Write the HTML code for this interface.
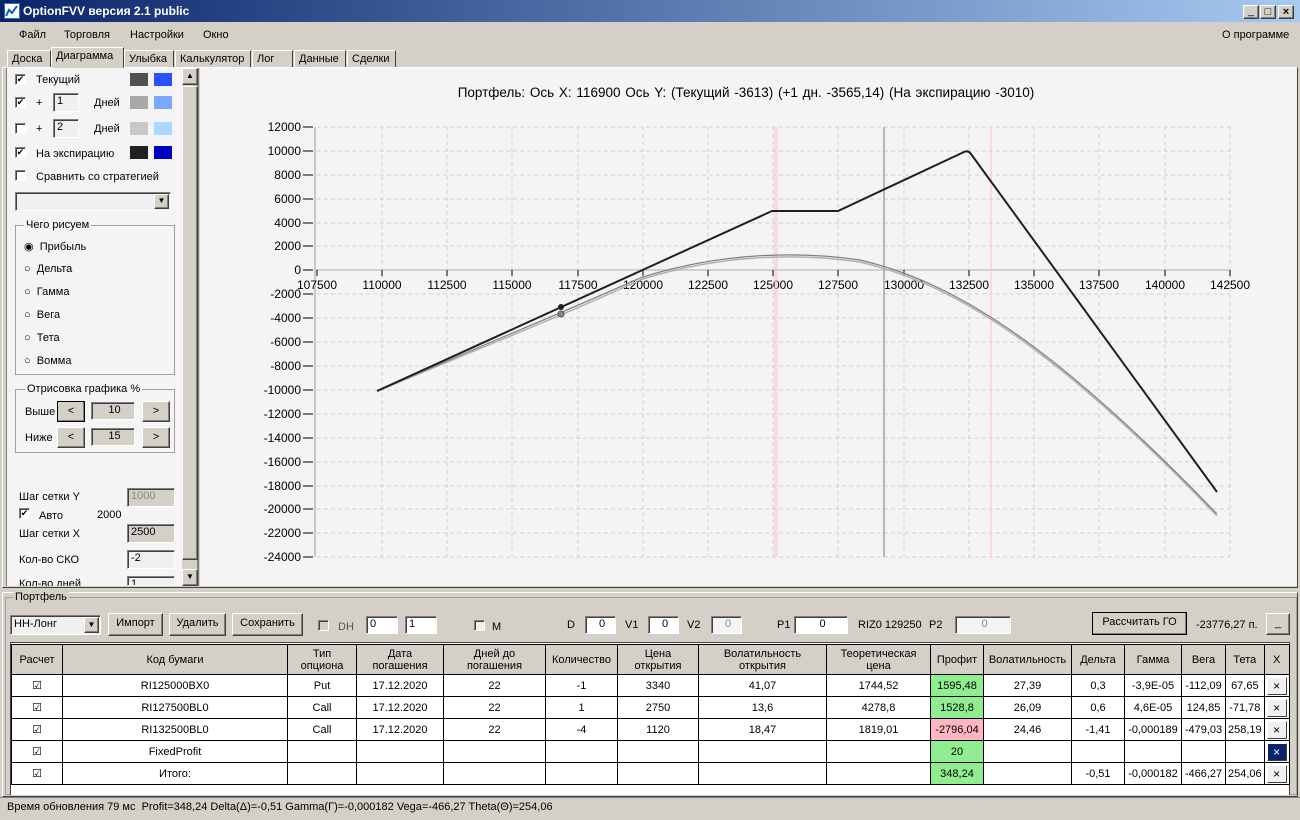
<!DOCTYPE html>
<html><head><meta charset="utf-8"><style>
*{box-sizing:border-box;margin:0;padding:0}
body{width:1300px;height:820px;overflow:hidden;background:#d4d0c8;font-family:"Liberation Sans",sans-serif;font-size:11px;color:#000;position:relative}
.a{position:absolute}
.btn{position:absolute;background:#d4d0c8;border:1px solid;border-color:#fff #404040 #404040 #fff;box-shadow:inset -1px -1px 0 #808080;text-align:center;line-height:19px}
.inp{position:absolute;background:#fff;border:1px solid;border-color:#808080 #fff #fff #808080;box-shadow:inset 1px 1px 0 #404040;padding-left:3px;line-height:15px}
.cb{position:absolute;width:11px;height:11px;background:#fff;border:1px solid;border-color:#808080 #fff #fff #808080;box-shadow:inset 1px 1px 0 #404040;font-size:9px;line-height:9px;text-align:center}
.tab{position:absolute;top:50px;height:18px;border:1px solid;border-color:#fff #404040 transparent #fff;line-height:16px;padding:0 4px;font-size:11px}
table{border-collapse:collapse;position:absolute;left:11px;top:644px;font-size:11px}
td{border:1px solid #000;text-align:center;height:22px;padding:0 2px;background:#fff}
tr.h td{background:#d4d0c8;height:30px;line-height:12px}
.g{background:#90ee90 !important}.r{background:#ffb6c1 !important}
.x{display:inline-block;width:20px;height:18px;border:1px solid;border-color:#fff #404040 #404040 #fff;background:#f0f0f0;line-height:16px;font-size:12px}
</style></head><body>
<div class="a" style="left:0;top:0;width:1300px;height:22px;background:linear-gradient(90deg,#0a246a,#a6caf0);"></div>
<div class="a" style="left:4px;top:3px;width:16px;height:16px;background:#fff;border:1px solid #3a6ea5"><svg width="14" height="14"><path d="M1 12 L4 6 L7 9 L12 2" stroke="#1060c0" stroke-width="2" fill="none"/></svg></div>
<div class="a" style="left:23px;top:4px;color:#fff;font-weight:bold;font-size:12px">OptionFVV версия 2.1 public</div>
<div class="btn" style="left:1243px;top:5px;width:16px;height:14px;line-height:10px">_</div>
<div class="btn" style="left:1260px;top:5px;width:16px;height:14px;line-height:12px">□</div>
<div class="btn" style="left:1278px;top:5px;width:16px;height:14px;line-height:12px;font-weight:bold">×</div>
<div class="a" style="left:19px;top:29px">Файл</div>
<div class="a" style="left:64px;top:29px">Торговля</div>
<div class="a" style="left:130px;top:29px">Настройки</div>
<div class="a" style="left:203px;top:29px">Окно</div>
<div class="a" style="left:1222px;top:29px">О программе</div>
<div class="tab" style="left:7px;width:44px">Доска</div>
<div class="tab" style="left:51px;top:47px;height:21px;width:73px;background:#d4d0c8;z-index:2">Диаграмма</div>
<div class="tab" style="left:124px;width:50px">Улыбка</div>
<div class="tab" style="left:175px;width:76px">Калькулятор</div>
<div class="tab" style="left:252px;width:41px">Лог</div>
<div class="tab" style="left:294px;width:52px">Данные</div>
<div class="tab" style="left:347px;width:49px">Сделки</div>
<div class="a" style="left:2px;top:67px;width:1296px;height:521px;border:1px solid;border-color:#fff #404040 #404040 #fff"></div>
<div class="a" style="left:6px;top:68px;width:176px;height:518px;background:#f4f4f4;border-left:1px solid #808080"></div>
<div class="a" style="left:182px;top:68px;width:17px;height:518px;background:#d4d0c8;border-right:2px solid #808080"></div>
<div class="btn" style="left:182px;top:68px;width:16px;height:17px;font-size:8px;line-height:14px">▲</div>
<div class="btn" style="left:182px;top:86px;width:16px;height:474px"></div>
<div class="btn" style="left:182px;top:569px;width:16px;height:17px;font-size:8px;line-height:14px">▼</div>
<div class="cb" style="left:15px;top:74px">✔</div><div class="a" style="left:36px;top:74px">Текущий</div>
<div class="a" style="left:130px;top:73px;width:18px;height:13px;background:#505050"></div><div class="a" style="left:154px;top:73px;width:18px;height:13px;background:#2a50ff"></div>
<div class="cb" style="left:15px;top:97px">✔</div><div class="a" style="left:36px;top:97px">+</div>
<div class="inp" style="left:53px;top:93px;width:26px;height:19px;background:#f0f0f0">1</div><div class="a" style="left:94px;top:97px">Дней</div>
<div class="a" style="left:130px;top:96px;width:18px;height:13px;background:#a8a8a8"></div><div class="a" style="left:154px;top:96px;width:18px;height:13px;background:#7aa8ff"></div>
<div class="cb" style="left:15px;top:123px"></div><div class="a" style="left:36px;top:123px">+</div>
<div class="inp" style="left:53px;top:119px;width:26px;height:19px;background:#f0f0f0">2</div><div class="a" style="left:94px;top:123px">Дней</div>
<div class="a" style="left:130px;top:122px;width:18px;height:13px;background:#c8c8c8"></div><div class="a" style="left:154px;top:122px;width:18px;height:13px;background:#aad8ff"></div>
<div class="cb" style="left:15px;top:147px">✔</div><div class="a" style="left:36px;top:148px">На экспирацию</div>
<div class="a" style="left:130px;top:146px;width:18px;height:13px;background:#202020"></div><div class="a" style="left:154px;top:146px;width:18px;height:13px;background:#0000c0"></div>
<div class="cb" style="left:15px;top:170px"></div><div class="a" style="left:36px;top:171px">Сравнить со стратегией</div>
<div class="inp" style="left:15px;top:192px;width:156px;height:19px;background:#f0f0f0"></div><div class="btn" style="left:154px;top:194px;width:15px;height:15px;font-size:8px;line-height:12px">▼</div>
<div class="a" style="left:15px;top:225px;width:160px;height:150px;border:1px solid #a0a0a0"></div>
<div class="a" style="left:24px;top:219px;background:#f4f4f4;padding:0 2px">Чего рисуем</div>
<div class="a" style="left:24px;top:240px">◉ &nbsp;Прибыль</div>
<div class="a" style="left:24px;top:263px">○ &nbsp;Дельта</div>
<div class="a" style="left:24px;top:286px">○ &nbsp;Гамма</div>
<div class="a" style="left:24px;top:309px">○ &nbsp;Вега</div>
<div class="a" style="left:24px;top:332px">○ &nbsp;Тета</div>
<div class="a" style="left:24px;top:355px">○ &nbsp;Вомма</div>
<div class="a" style="left:15px;top:389px;width:160px;height:64px;border:1px solid #a0a0a0"></div>
<div class="a" style="left:25px;top:383px;background:#f4f4f4;padding:0 2px">Отрисовка графика %</div>
<div class="a" style="left:25px;top:406px">Выше</div><div class="btn" style="left:57px;top:401px;width:28px;height:21px;border-color:#000">&lt;</div>
<div class="inp" style="left:91px;top:402px;width:44px;height:18px;background:#d4d0c8;text-align:center">10</div><div class="btn" style="left:142px;top:401px;width:28px;height:21px">&gt;</div>
<div class="a" style="left:25px;top:432px">Ниже</div><div class="btn" style="left:57px;top:427px;width:28px;height:21px">&lt;</div>
<div class="inp" style="left:91px;top:428px;width:44px;height:18px;background:#d4d0c8;text-align:center">15</div><div class="btn" style="left:142px;top:427px;width:28px;height:21px">&gt;</div>
<div class="a" style="left:19px;top:491px">Шаг сетки Y</div><div class="inp" style="left:127px;top:488px;width:48px;height:19px;background:#d4d0c8;color:#888">1000</div>
<div class="cb" style="left:19px;top:508px">✔</div><div class="a" style="left:39px;top:510px">Авто</div><div class="a" style="left:97px;top:509px">2000</div>
<div class="a" style="left:19px;top:528px">Шаг сетки X</div><div class="inp" style="left:127px;top:524px;width:48px;height:19px;background:#d4d0c8">2500</div>
<div class="a" style="left:19px;top:554px">Кол-во СКО</div><div class="inp" style="left:127px;top:550px;width:48px;height:19px;background:#f0f0f0">-2</div>
<div class="a" style="left:19px;top:578px;height:8px;overflow:hidden">Кол-во дней</div><div class="inp" style="left:127px;top:576px;width:48px;height:10px;background:#f0f0f0;overflow:hidden">1</div>
<svg class="a" style="left:200px;top:68px" width="1097" height="518" viewBox="200 68 1097 518">
<rect x="200" y="68" width="1097" height="518" fill="#f4f4f4"/>
<text x="746" y="97" font-size="13.5" text-anchor="middle" font-family="Liberation Sans" word-spacing="1">Портфель: Ось X: 116900 Ось Y: (Текущий -3613) (+1 дн. -3565,14) (На экспирацию -3010)</text>
<g stroke="#d0d0d0" stroke-dasharray="4,3" stroke-width="1">
<path d="M382 127V557M447 127V557M512 127V557M578 127V557M643 127V557M708 127V557M773 127V557M838 127V557M904 127V557M969 127V557M1034 127V557M1099 127V557M1165 127V557M1230 127V557"/>
<path d="M317 127H1230M317 151H1230M317 175H1230M317 199H1230M317 223H1230M317 246H1230M317 294H1230M317 318H1230M317 342H1230M317 366H1230M317 390H1230M317 414H1230M317 438H1230M317 462H1230M317 486H1230M317 509H1230M317 533H1230M317 557H1230"/>
</g>
<path d="M315 127V557" stroke="#c8c8c8" stroke-width="2"/>
<path d="M315 270H1230" stroke="#d0d0d0" stroke-width="2"/>
<g stroke="#000"><path d="M303 127H313M303 151H313M303 175H313M303 199H313M303 223H313M303 246H313M303 270H313M303 294H313M303 318H313M303 342H313M303 366H313M303 390H313M303 414H313M303 438H313M303 462H313M303 486H313M303 509H313M303 533H313M303 557H313"/>
<path d="M317 270V276M382 270V276M447 270V276M512 270V276M578 270V276M643 270V276M708 270V276M773 270V276M838 270V276M904 270V276M969 270V276M1034 270V276M1099 270V276M1165 270V276M1230 270V276"/></g>
<g font-size="12" font-family="Liberation Sans" text-anchor="end" fill="#000">
<text x="301" y="131">12000</text><text x="301" y="155">10000</text><text x="301" y="179">8000</text><text x="301" y="203">6000</text><text x="301" y="227">4000</text><text x="301" y="250">2000</text><text x="301" y="274">0</text><text x="301" y="298">-2000</text><text x="301" y="322">-4000</text><text x="301" y="346">-6000</text><text x="301" y="370">-8000</text><text x="301" y="394">-10000</text><text x="301" y="418">-12000</text><text x="301" y="442">-14000</text><text x="301" y="466">-16000</text><text x="301" y="490">-18000</text><text x="301" y="513">-20000</text><text x="301" y="537">-22000</text><text x="301" y="561">-24000</text></g>
<g font-size="12" font-family="Liberation Sans" text-anchor="middle">
<text x="317" y="289">107500</text><text x="382" y="289">110000</text><text x="447" y="289">112500</text><text x="512" y="289">115000</text><text x="578" y="289">117500</text><text x="643" y="289">120000</text><text x="708" y="289">122500</text><text x="773" y="289">125000</text><text x="838" y="289">127500</text><text x="904" y="289">130000</text><text x="969" y="289">132500</text><text x="1034" y="289">135000</text><text x="1099" y="289">137500</text><text x="1165" y="289">140000</text><text x="1230" y="289">142500</text></g>
<path d="M775 127V557M777 127V557M991 127V557" stroke="#ffc0c8" stroke-width="1"/>
<path d="M884 127V557" stroke="#a0a0a8" stroke-width="1.5"/>
<path d="M378 391 C470 352 560 317 640 280 C720 254 800 253 860 262 C950 283 1050 342 1217 516" stroke="#b0b0b0" stroke-width="1.5" fill="none"/>
<path d="M378 391 C470 350 560 314 640 278 C720 252 800 251 860 260 C950 281 1050 340 1217 514" stroke="#808080" stroke-width="1.2" fill="none"/>
<path d="M377 391 L772 211 L838 211 L964 152 Q968 150 971 154 L1217 492" stroke="#202020" stroke-width="2" fill="none"/>
<circle cx="561" cy="307" r="3" fill="#202020"/><circle cx="561" cy="314" r="3" fill="#888" stroke="#555"/>
</svg>
<div class="a" style="left:2px;top:592px;width:1296px;height:205px;border:1px solid;border-color:#fff #404040 #404040 #fff"></div>
<div class="a" style="left:5px;top:597px;width:1292px;height:198px;border:1px solid #a0a0a0"></div>
<div class="a" style="left:13px;top:591px;background:#d4d0c8;padding:0 2px">Портфель</div>
<div class="inp" style="left:10px;top:615px;width:91px;height:20px;background:#f0f0f0;line-height:17px">НН-Лонг</div><div class="btn" style="left:84px;top:617px;width:15px;height:16px;font-size:8px;line-height:13px">▼</div>
<div class="btn" style="left:108px;top:613px;width:55px;height:23px">Импорт</div>
<div class="btn" style="left:169px;top:613px;width:57px;height:23px">Удалить</div>
<div class="btn" style="left:232px;top:613px;width:71px;height:23px">Сохранить</div>
<div class="cb" style="left:318px;top:620px;background:#d4d0c8"></div><div class="a" style="left:338px;top:621px;color:#555">DH</div>
<div class="inp" style="left:366px;top:616px;width:32px;height:18px">0</div><div class="inp" style="left:405px;top:616px;width:32px;height:18px">1</div>
<div class="cb" style="left:474px;top:620px;background:#f0f0f0"></div><div class="a" style="left:492px;top:621px">M</div>
<div class="a" style="left:567px;top:619px">D</div><div class="inp" style="left:585px;top:616px;width:31px;height:18px;text-align:center">0</div>
<div class="a" style="left:625px;top:619px">V1</div><div class="inp" style="left:648px;top:616px;width:31px;height:18px;text-align:center">0</div>
<div class="a" style="left:687px;top:619px">V2</div><div class="inp" style="left:711px;top:616px;width:31px;height:18px;text-align:center;background:#f4f4f4;color:#888">0</div>
<div class="a" style="left:777px;top:619px">P1</div><div class="inp" style="left:794px;top:616px;width:54px;height:18px;text-align:center">0</div>
<div class="a" style="left:858px;top:619px">RIZ0 129250</div><div class="a" style="left:929px;top:619px">P2</div><div class="inp" style="left:955px;top:616px;width:56px;height:18px;text-align:center;background:#f4f4f4;color:#888">0</div>
<div class="btn" style="left:1092px;top:612px;width:95px;height:23px;border-color:#000">Рассчитать ГО</div>
<div class="a" style="left:1196px;top:619px">-23776,27 п.</div>
<div class="btn" style="left:1266px;top:613px;width:24px;height:22px">_</div>
<div class="a" style="left:10px;top:642px;width:1280px;height:153px;background:#fff;border:1px solid #404040;border-bottom:none"></div>
<table>
<tr class="h"><td style="width:51px">Расчет</td><td style="width:225px">Код бумаги</td><td style="width:69px">Тип<br>опциона</td><td style="width:87px">Дата<br>погашения</td><td style="width:102px">Дней до<br>погашения</td><td style="width:72px">Количество</td><td style="width:81px">Цена<br>открытия</td><td style="width:128px">Волатильность<br>открытия</td><td style="width:104px">Теоретическая<br>цена</td><td style="width:53px">Профит</td><td style="width:88px">Волатильность</td><td style="width:53px">Дельта</td><td style="width:57px">Гамма</td><td style="width:44px">Вега</td><td style="width:38px">Тета</td><td style="width:24px">X</td></tr>
<tr><td>☑</td><td>RI125000BX0</td><td>Put</td><td>17.12.2020</td><td>22</td><td>-1</td><td>3340</td><td>41,07</td><td>1744,52</td><td class="g">1595,48</td><td>27,39</td><td>0,3</td><td>-3,9E-05</td><td>-112,09</td><td>67,65</td><td><span class="x">×</span></td></tr>
<tr><td>☑</td><td>RI127500BL0</td><td>Call</td><td>17.12.2020</td><td>22</td><td>1</td><td>2750</td><td>13,6</td><td>4278,8</td><td class="g">1528,8</td><td>26,09</td><td>0,6</td><td>4,6E-05</td><td>124,85</td><td>-71,78</td><td><span class="x">×</span></td></tr>
<tr><td>☑</td><td>RI132500BL0</td><td>Call</td><td>17.12.2020</td><td>22</td><td>-4</td><td>1120</td><td>18,47</td><td>1819,01</td><td class="r">-2796,04</td><td>24,46</td><td>-1,41</td><td>-0,000189</td><td>-479,03</td><td>258,19</td><td><span class="x">×</span></td></tr>
<tr><td>☑</td><td>FixedProfit</td><td></td><td></td><td></td><td></td><td></td><td></td><td></td><td class="g">20</td><td></td><td></td><td></td><td></td><td></td><td><span class="x" style="background:#0a246a;color:#fff">×</span></td></tr>
<tr><td>☑</td><td>Итого:</td><td></td><td></td><td></td><td></td><td></td><td></td><td></td><td class="g">348,24</td><td></td><td>-0,51</td><td>-0,000182</td><td>-466,27</td><td>254,06</td><td><span class="x">×</span></td></tr>
</table>
<div class="a" style="left:0;top:797px;width:1300px;height:23px;border-top:1px solid #808080"></div>
<div class="a" style="left:7px;top:801px">Время обновления 79 мс &nbsp;Profit=348,24 Delta(Δ)=-0,51 Gamma(Γ)=-0,000182 Vega=-466,27 Theta(Θ)=254,06</div>
</body></html>
